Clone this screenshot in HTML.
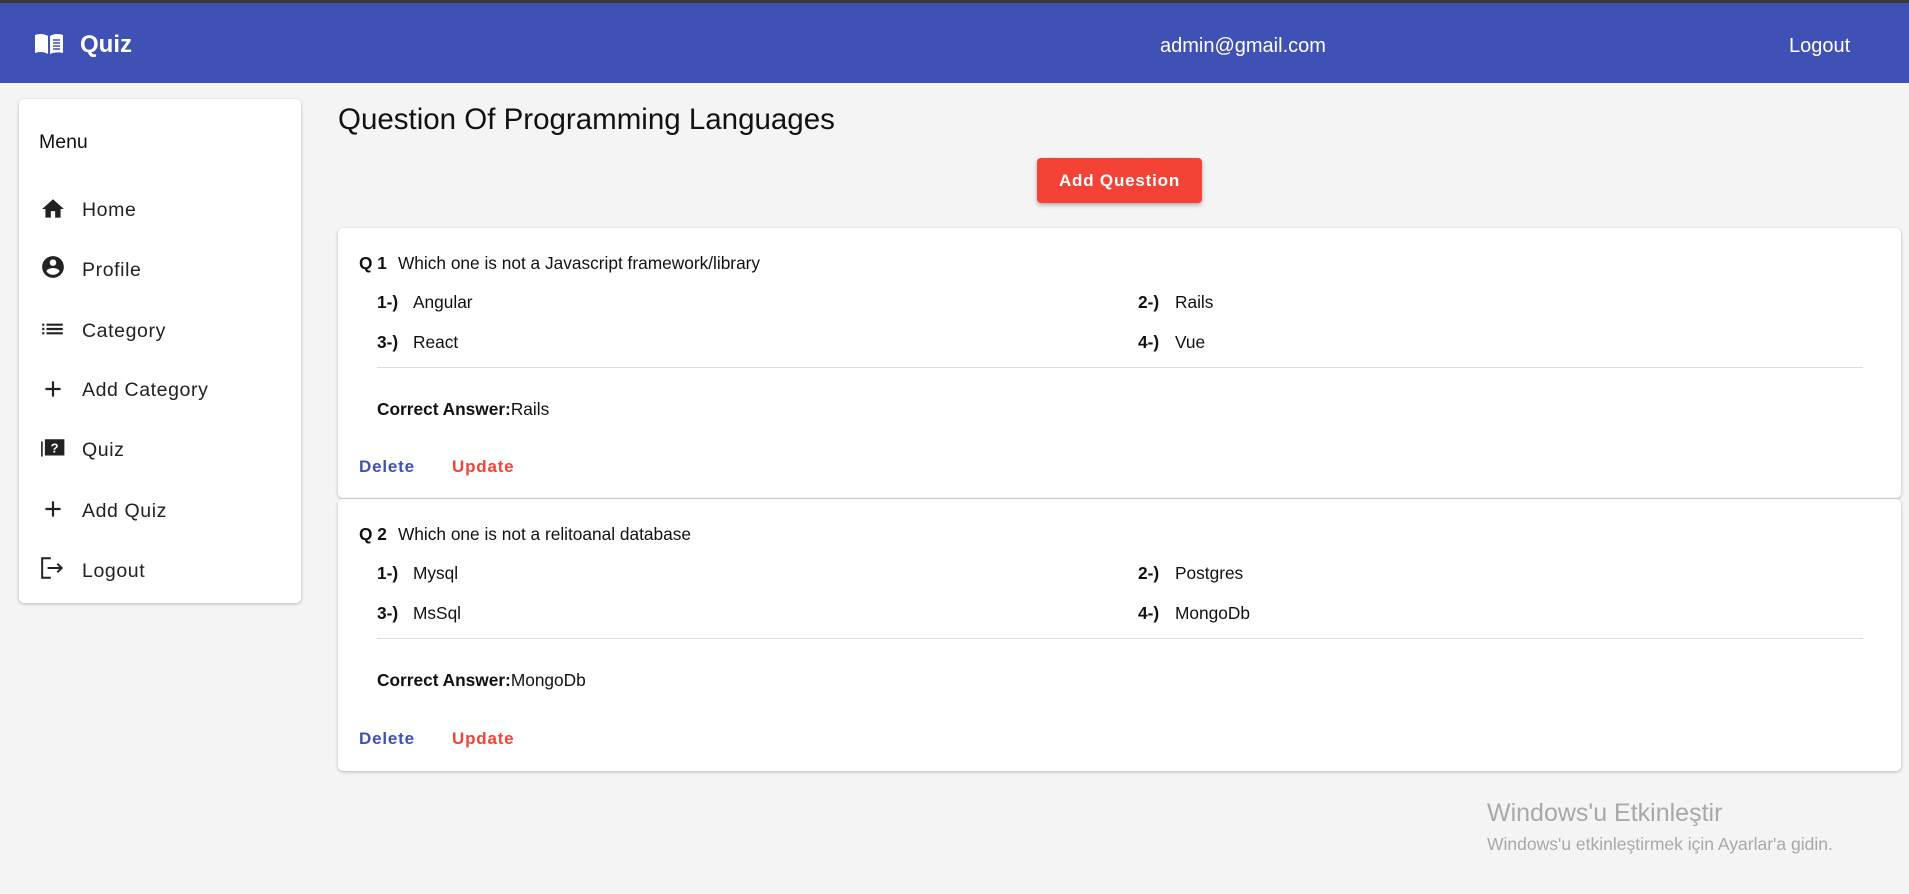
<!DOCTYPE html>
<html><head><meta charset="utf-8"><style>
*{margin:0;padding:0;box-sizing:border-box}
body{width:1909px;height:894px;background:#f4f4f4;font-family:"Liberation Sans",Arial,sans-serif;position:relative;overflow:hidden;color:#111}
.a{position:absolute;white-space:nowrap}
.hdr{left:0;top:0;width:1909px;height:83px;background:#3f51b5;border-top:3px solid #3a3a3a}
.card{background:#fff;border-radius:5px;box-shadow:0 1px 3px rgba(0,0,0,.25)}
.mi{font-size:19.5px;letter-spacing:.6px;color:#222}
.ic{left:40px;width:26px;height:26px}
.q{font-size:17.3px}
.b{font-weight:bold}
.btn{font-size:17px;font-weight:bold;letter-spacing:.8px}
</style></head><body>
<div class="a hdr"></div>
<svg class="a" style="left:34px;top:32px" width="30" height="24" viewBox="0 0 30 24"><path d="M1 3c4-1.5 9-1.5 13 1v18c-4-2.5-9-2.5-13-1z" fill="#fff"/><path d="M16 4c4-2.5 9-2.5 13-1v18c-4-1-9-1-13 1z" fill="#fff"/><path d="M19 8h7M19 11h7M19 14h7M19 17h7" stroke="#3f51b5" stroke-width="1.5"/></svg>
<div class="a" style="left:80px;top:31px;font-size:24px;font-weight:bold;color:#fff">Quiz</div>
<div class="a" style="left:1160px;top:35px;font-size:20px;color:#fff">admin@gmail.com</div>
<div class="a" style="left:1789px;top:35px;font-size:20px;color:#fff">Logout</div>

<div class="a card" style="left:19px;top:99px;width:282px;height:504px"></div>
<div class="a" style="left:39px;top:131px;font-size:19.5px">Menu</div>

<svg class="a ic" style="top:196px" viewBox="0 0 24 24"><path d="M10 20v-6h4v6h5v-8h3L12 3 2 12h3v8z" fill="#222"/></svg>
<div class="a mi" style="left:82px;top:199px">Home</div>
<svg class="a ic" style="top:254px" viewBox="0 0 24 24"><path d="M12 2C6.5 2 2 6.5 2 12s4.5 10 10 10 10-4.5 10-10S17.5 2 12 2zm0 3c1.7 0 3 1.3 3 3s-1.3 3-3 3-3-1.3-3-3 1.3-3 3-3zm0 14.2c-2.5 0-4.7-1.3-6-3.2 0-2 4-3.1 6-3.1s6 1.1 6 3.1c-1.3 1.9-3.5 3.2-6 3.2z" fill="#222"/></svg>
<div class="a mi" style="left:82px;top:259px">Profile</div>
<svg class="a ic" style="top:316px" viewBox="0 0 24 24"><path d="M2 7h2v2H2zm0 4h2v2H2zm0 4h2v2H2zm4-8h15v2H6zm0 4h15v2H6zm0 4h15v2H6z" fill="#222"/></svg>
<div class="a mi" style="left:82px;top:320px">Category</div>
<svg class="a ic" style="top:376px" viewBox="0 0 24 24"><path d="M19 13h-6v6h-2v-6H5v-2h6V5h2v6h6z" fill="#222"/></svg>
<div class="a mi" style="left:82px;top:379px">Add Category</div>
<svg class="a ic" style="top:436px" viewBox="0 0 24 24"><path d="M1 5h1.5v14H1z" fill="#222"/><rect x="4.5" y="3" width="18" height="15" fill="#222"/><text x="13.5" y="15" font-size="12" font-weight="bold" fill="#fff" text-anchor="middle" font-family="Liberation Sans">?</text></svg>
<div class="a mi" style="left:82px;top:439px">Quiz</div>
<svg class="a ic" style="top:496px" viewBox="0 0 24 24"><path d="M19 13h-6v6h-2v-6H5v-2h6V5h2v6h6z" fill="#222"/></svg>
<div class="a mi" style="left:82px;top:500px">Add Quiz</div>
<svg class="a ic" style="top:555px" viewBox="0 0 24 24"><path d="M10 3H2v18h8" fill="none" stroke="#222" stroke-width="1.8"/><path d="M7 12h13M16 8l4 4-4 4" fill="none" stroke="#222" stroke-width="1.8"/></svg>
<div class="a mi" style="left:82px;top:560px">Logout</div>

<div class="a" style="left:338px;top:103px;font-size:29.5px;color:#111">Question Of Programming Languages</div>
<div class="a" style="left:1037px;top:158px;width:165px;height:45px;background:#f44336;border-radius:4px;box-shadow:0 2px 4px rgba(0,0,0,.3);color:#fff;text-align:center;line-height:45px" ><span class="btn">Add Question</span></div>

<div class="a card" style="left:338px;top:228px;width:1563px;height:270px"></div>
<div class="a q" style="left:359px;top:253px"><b>Q 1</b></div>
<div class="a q" style="left:398px;top:253px">Which one is not a Javascript framework/library</div>
<div class="a q b" style="left:377px;top:292px">1-)</div><div class="a q" style="left:413px;top:292px">Angular</div>
<div class="a q b" style="left:1138px;top:292px">2-)</div><div class="a q" style="left:1175px;top:292px">Rails</div>
<div class="a q b" style="left:377px;top:332px">3-)</div><div class="a q" style="left:413px;top:332px">React</div>
<div class="a q b" style="left:1138px;top:332px">4-)</div><div class="a q" style="left:1175px;top:332px">Vue</div>
<div class="a" style="left:377px;top:367px;width:1486px;height:1px;background:#ddd"></div>
<div class="a q" style="left:377px;top:399px"><b>Correct Answer:</b>Rails</div>
<div class="a btn" style="left:359px;top:457px;color:#3f51b5">Delete</div>
<div class="a btn" style="left:452px;top:457px;color:#f44336">Update</div>

<div class="a card" style="left:338px;top:499px;width:1563px;height:272px"></div>
<div class="a q" style="left:359px;top:524px"><b>Q 2</b></div>
<div class="a q" style="left:398px;top:524px">Which one is not a relitoanal database</div>
<div class="a q b" style="left:377px;top:563px">1-)</div><div class="a q" style="left:413px;top:563px">Mysql</div>
<div class="a q b" style="left:1138px;top:563px">2-)</div><div class="a q" style="left:1175px;top:563px">Postgres</div>
<div class="a q b" style="left:377px;top:603px">3-)</div><div class="a q" style="left:413px;top:603px">MsSql</div>
<div class="a q b" style="left:1138px;top:603px">4-)</div><div class="a q" style="left:1175px;top:603px">MongoDb</div>
<div class="a" style="left:377px;top:638px;width:1486px;height:1px;background:#ddd"></div>
<div class="a q" style="left:377px;top:670px"><b>Correct Answer:</b>MongoDb</div>
<div class="a btn" style="left:359px;top:729px;color:#3f51b5">Delete</div>
<div class="a btn" style="left:452px;top:729px;color:#f44336">Update</div>

<div class="a" style="left:1487px;top:799px;font-size:25px;color:#a8a8a8">Windows'u Etkinleştir</div>
<div class="a" style="left:1487px;top:834px;font-size:17.5px;color:#a8a8a8">Windows'u etkinleştirmek için Ayarlar'a gidin.</div>
</body></html>
